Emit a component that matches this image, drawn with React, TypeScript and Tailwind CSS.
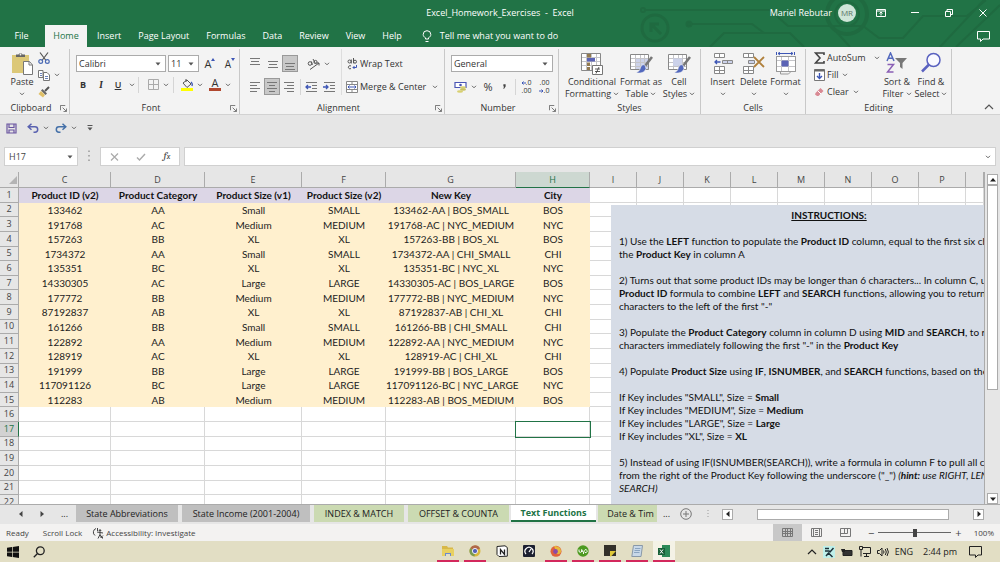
import type { ReactNode } from 'react';

const tabs = ['Insert', 'Page Layout', 'Formulas', 'Data', 'Review', 'View', 'Help'];

const headers = ['Product ID (v2)', 'Product Category', 'Product Size (v1)', 'Product Size (v2)', 'New Key', 'City'];

const records = [
    ['133462', 'AA', 'Small', 'SMALL', '133462-AA | BOS_SMALL', 'BOS'],
    ['191768', 'AC', 'Medium', 'MEDIUM', '191768-AC | NYC_MEDIUM', 'NYC'],
    ['157263', 'BB', 'XL', 'XL', '157263-BB | BOS_XL', 'BOS'],
    ['1734372', 'AA', 'Small', 'SMALL', '1734372-AA | CHI_SMALL', 'CHI'],
    ['135351', 'BC', 'XL', 'XL', '135351-BC | NYC_XL', 'NYC'],
    ['14330305', 'AC', 'Large', 'LARGE', '14330305-AC | BOS_LARGE', 'BOS'],
    ['177772', 'BB', 'Medium', 'MEDIUM', '177772-BB | NYC_MEDIUM', 'NYC'],
    ['87192837', 'AB', 'XL', 'XL', '87192837-AB | CHI_XL', 'CHI'],
    ['161266', 'BB', 'Small', 'SMALL', '161266-BB | CHI_SMALL', 'CHI'],
    ['122892', 'AA', 'Medium', 'MEDIUM', '122892-AA | NYC_MEDIUM', 'NYC'],
    ['128919', 'AC', 'XL', 'XL', '128919-AC | CHI_XL', 'CHI'],
    ['191999', 'BB', 'Large', 'LARGE', '191999-BB | BOS_LARGE', 'BOS'],
    ['117091126', 'BC', 'Large', 'LARGE', '117091126-BC | NYC_LARGE', 'NYC'],
    ['112283', 'AB', 'Medium', 'MEDIUM', '112283-AB | BOS_MEDIUM', 'BOS'],
];

const columns = [
    { id: 'C', width: 'w-[92px]' },
    { id: 'D', width: 'w-[94px]' },
    { id: 'E', width: 'w-[97px]' },
    { id: 'F', width: 'w-[84px]' },
    { id: 'G', width: 'w-[130px]' },
    { id: 'H', width: 'w-[74px]' },
    { id: 'I', width: 'w-[47px]' },
    { id: 'J', width: 'w-[47px]' },
    { id: 'K', width: 'w-[47px]' },
    { id: 'L', width: 'w-[47px]' },
    { id: 'M', width: 'w-[47px]' },
    { id: 'N', width: 'w-[47px]' },
    { id: 'O', width: 'w-[47px]' },
    { id: 'P', width: 'w-[47px]' },
    { id: '', width: '' },
];

function Chevron({ className = '' }: { className?: string }) {
    return (
        <svg viewBox="0 0 6 4" className={`h-1 w-1.5 shrink-0 ${className}`} fill="none" stroke="#666" strokeWidth="1">
            <path d="M1 .8 3 2.8 5 .8" />
        </svg>
    );
}

function Caret() {
    return (
        <svg viewBox="0 0 6 4" className="pointer-events-none h-1 w-1.5 shrink-0" fill="#555">
            <path d="M.5.5h5L3 3.500z" />
        </svg>
    );
}

function Divider() {
    return <span className="h-4 w-px shrink-0 bg-[#d5d5d5]" />;
}

function Launcher({ label }: { label: string }) {
    return (
        <button aria-label={label} className="shrink-0">
            <svg viewBox="0 0 8 8" className="size-[7px]" fill="none" stroke="#666">
                <path d="M.5 6V.5H6M3 3l4 4M7.500 4v3.500H4" />
            </svg>
        </button>
    );
}

function Group({ title, className, launcher, children }: { title: string; className: string; launcher?: boolean; children: ReactNode }) {
    return (
        <section className={`flex shrink-0 flex-col border-r border-[#c8c8c8] ${className}`}>
            <div className="min-h-0 flex-1">{children}</div>
            <div className="flex h-3 items-center px-0.5">
                <span className="flex-1 text-center">{title}</span>
                {launcher && <Launcher label={`${title} settings`} />}
            </div>
        </section>
    );
}

function IconButton({ label, className = 'w-[18px]', children }: { label: string; className?: string; children: ReactNode }) {
    return (
        <button aria-label={label} className={`flex h-[17px] shrink-0 items-center justify-center ${className}`}>
            {children}
        </button>
    );
}

function BigButton({ icon, lines, className, arrow = 'inline' }: { icon: ReactNode; lines: string[]; className: string; arrow?: 'inline' | 'below' }) {
    return (
        <button className={`flex shrink-0 flex-col items-center pt-0.5 leading-3 whitespace-nowrap ${className}`}>
            <span className="mb-px flex h-6 items-center">{icon}</span>
            {lines.map((line, i) => (
                <span key={line} className="flex items-center gap-0.5">
                    {line}
                    {arrow === 'inline' && i === lines.length - 1 && <Chevron />}
                </span>
            ))}
            {arrow === 'below' && <Chevron className="mt-1" />}
        </button>
    );
}

/* Horizontal rules of a paragraph, one [x1, x2] pair per line */
function Lines({ rows, top = 0 }: { rows: number[][]; top?: number }) {
    return (
        <svg viewBox="0 0 12 12" className="size-3" stroke="#777" strokeWidth="1">
            {rows.map(([a, b], i) => (
                <path key={i} d={`M${a} ${top + i * 3 + 0.5}H${b}`} />
            ))}
        </svg>
    );
}

function Indent({ flip }: { flip?: boolean }) {
    return (
        <svg viewBox="0 0 13 12" className="h-3 w-[13px]" fill="none" stroke="#777">
            <path d="M1 1.500h11M7 4.500h5M7 7.500h5M1 10.500h11" />
            <path d={flip ? 'M0 6h5M3 4l2 2-2 2' : 'M6 6H1M3 4 1 6l2 2'} stroke="#3d56b5" strokeWidth="1.300" />
        </svg>
    );
}

function TableBrush({ solid }: { solid?: boolean }) {
    return (
        <svg viewBox="0 0 24 24" className="size-6" fill="none">
            <path d="M1.500 3.500h18v15h-18z" fill="#fff" />
            <path d={solid ? 'M6 7h9v8H6z' : 'M6 7h14v12H6z'} fill="#ccd2ea" />
            <path d="M1.500 7.500h18M1.500 11.500h18M1.500 15.500h18M6.500 3.500v15M11.500 3.500v15M15.500 3.500v15" stroke="#c4c4c8" />
            {solid && <path d="M6 7.500h9v7H6z" fill="#ccd2ea" />}
            <path d="M1.500 3.500h18v15h-18z" stroke="#888" />
            <path d="m23 6-7 9" stroke="#777" strokeWidth="2.600" />
            <path d="M16 14c-3-1-4 1-5 4-.6 2-2 3-4 3.500 4 1.500 9 0 10-4z" fill="#5268bd" stroke="#f3f3f3" strokeWidth=".6" />
        </svg>
    );
}

function TitleBar() {
    return (
        <header className="relative h-[47px] shrink-0 bg-[#217346] text-white">
            <svg viewBox="0 0 360 47" className="absolute top-0 right-0 h-[47px] w-[360px]" fill="none" stroke="#1f6a40" strokeWidth="2">
                <circle cx="3" cy="10" r="2" />
                <path d="M5 10h125l18 16h75l16 12h24l20-22h44L346 0M50 24h62l12 9M70 47l14-14h66l14 14M210 47l-18-20M300 47l44-47M316 47l44-42" />
                <circle cx="15" cy="28" r="13" strokeWidth="3" />
                <path d="m21 34-10-10m0 8v-8h8" strokeWidth="3" />
                <circle cx="49" cy="24" r="2.500" fill="#1f6a40" />
                <circle cx="207" cy="14" r="20" strokeWidth="4" />
                <circle cx="207" cy="14" r="12" />
            </svg>
            <div className="relative grid h-[25px] grid-cols-[1fr_auto_1fr] items-center">
                <span />
                <span className="whitespace-pre">Excel_Homework_Exercises  -  Excel</span>
                <div className="flex items-center justify-end pr-3">
                    <span className="mr-1.5">Mariel Rebutar</span>
                    <span className="mr-5 flex size-[18px] items-center justify-center rounded-full bg-[#cfe5d8] text-[8px] text-[#5c7468]">MR</span>
                    <button aria-label="Ribbon display options" className="mr-6">
                        <svg viewBox="0 0 10 8" className="h-2 w-2.5" fill="none" stroke="#fff">
                            <path d="M.5.5h9v7h-9zM.5 2h9M5 6.500V3M3.500 4.500 5 3l1.500 1.500" />
                        </svg>
                    </button>
                    <button aria-label="Minimize" className="mr-6">
                        <svg viewBox="0 0 10 8" className="h-2 w-2.5" stroke="#fff">
                            <path d="M1 3.500h8" />
                        </svg>
                    </button>
                    <button aria-label="Restore" className="mr-6">
                        <svg viewBox="0 0 10 8" className="h-2 w-2.5" fill="none" stroke="#fff">
                            <path d="M1.500 2.500h5v5h-5zM3 2.500V.5h5.500v5h-2" />
                        </svg>
                    </button>
                    <button aria-label="Close">
                        <svg viewBox="0 0 10 8" className="h-2 w-2.5" stroke="#fff">
                            <path d="m1.500.5 7 7m0-7-7 7" />
                        </svg>
                    </button>
                </div>
            </div>
            <nav className="relative flex h-[22px] items-center">
                <button className="w-[45px] pr-0.5 text-center">File</button>
                <button className="h-full w-[42px] bg-[#f3f3f3] text-[#217346]">Home</button>
                <div className="ml-2.5 flex gap-[17px]">
                    {tabs.map((tab) => (
                        <button key={tab}>{tab}</button>
                    ))}
                </div>
                <button className="ml-5 flex items-center gap-2">
                    <svg viewBox="0 0 10 13" className="h-[13px] w-2.5" fill="none" stroke="#fff">
                        <path d="M3.500 9V7.800C2 7 1.200 6 1.200 4.500a3.800 3.800 0 0 1 7.600 0C8.800 6 8 7 6.500 7.800V9zM3.500 11.500h3" />
                    </svg>
                    Tell me what you want to do
                </button>
                <button aria-label="Comments" className="mr-2.5 ml-auto">
                    <svg viewBox="0 0 13 11" className="h-[11px] w-[13px]" fill="none" stroke="#fff">
                        <path d="M.5.5h12v7.500H6L3.500 10.500V8h-3z" />
                    </svg>
                </button>
            </nav>
        </header>
    );
}

function Ribbon() {
    return (
        <div className="flex h-[68px] shrink-0 border-b border-[#d2d2d2] bg-[#f3f3f3] pt-0.5 text-[#333]">
            {/* Clipboard */}
            <Group title="Clipboard" className="w-[70px]" launcher>
                <div className="flex pl-2">
                    <BigButton
                        className="w-[28px]"
                        arrow="below"
                        lines={['Paste']}
                        icon={
                            <svg viewBox="0 0 22 23" className="h-[23px] w-[22px]">
                                <rect x="1" y="3" width="17" height="18" fill="#dcc878" />
                                <path d="M5 5V2.500h2.500a2.200 2.200 0 0 1 4 0H14V5z" fill="#666" />
                                <circle cx="9.500" cy="2.500" r=".9" fill="#f3f3f3" />
                                <path d="M12.500 9.500h6l3 3.500v9.500h-9z" fill="#fff" stroke="#777" />
                                <path d="M18 9.500V13h3.500" fill="none" stroke="#777" />
                            </svg>
                        }
                    />
                    <div className="ml-0.5 flex flex-col">
                        <IconButton label="Cut" className="w-3">
                            <svg viewBox="0 0 12 12" className="size-3" fill="none" stroke="#555" strokeWidth="1.200">
                                <path d="m2 .5 6 8M10 .5l-6 8" />
                                <circle cx="2.700" cy="9.500" r="1.900" stroke="#4a6ab5" />
                                <circle cx="9.300" cy="9.500" r="1.900" stroke="#4a6ab5" />
                            </svg>
                        </IconButton>
                        <IconButton label="Copy" className="w-[22px] gap-1">
                            <svg viewBox="0 0 12 12" className="size-3" fill="#fff" stroke="#777">
                                <path d="M.5 1.500H5v7H.5zM5.500 3.500H9l2.500 2.500v5.500h-6z" />
                                <path d="M7 7.500h3M7 9.500h3M2 4.500h2M2 6.500h2" stroke="#6a80b8" />
                            </svg>
                            <Chevron />
                        </IconButton>
                        <IconButton label="Format painter" className="w-3">
                            <svg viewBox="0 0 12 12" className="size-3">
                                <path d="m11 1-4 4" stroke="#555" strokeWidth="2" />
                                <path d="m4.500 3 4.500 4.500-1.500 1.500L3 4.500z" fill="#666" />
                                <path d="M3 5 7 9l-2 2.500L.5 8z" fill="#e0c068" />
                            </svg>
                        </IconButton>
                    </div>
                </div>
            </Group>

            {/* Font */}
            <Group title="Font" className="w-[170px]" launcher>
                <div className="flex items-center gap-0.5 pt-1.5 pl-1.5">
                    <label className="flex h-[17px] w-[90px] items-center border border-[#ababab] bg-white pr-1">
                        <select aria-label="Font name" className="h-full min-w-0 flex-1 appearance-none pl-0.5 outline-none">
                            <option>Calibri</option>
                        </select>
                        <Caret />
                    </label>
                    <label className="flex h-[17px] w-[31px] items-center border border-[#ababab] bg-white pr-1">
                        <select aria-label="Font size" className="h-full min-w-0 flex-1 appearance-none pl-0.5 outline-none">
                            <option>11</option>
                        </select>
                        <Caret />
                    </label>
                    <IconButton label="Increase font size">
                        <span className="text-[11px]">A</span>
                        <svg viewBox="0 0 4 3" className="mb-2 h-[3px] w-1" fill="#3d56b5">
                            <path d="M0 3 2 0l2 3z" />
                        </svg>
                    </IconButton>
                    <IconButton label="Decrease font size">
                        <span className="text-[10px]">A</span>
                        <svg viewBox="0 0 4 3" className="mb-2 h-[3px] w-1" fill="#3d56b5">
                            <path d="M0 0h4L2 3z" />
                        </svg>
                    </IconButton>
                </div>
                <div className="flex items-center pt-1 pl-1">
                    <IconButton label="Bold">
                        <b>B</b>
                    </IconButton>
                    <IconButton label="Italic">
                        <i className="font-serif text-[10px] font-bold">I</i>
                    </IconButton>
                    <IconButton label="Underline" className="w-4">
                        <u className="font-semibold">U</u>
                    </IconButton>
                    <IconButton label="Underline options" className="w-3">
                        <Chevron />
                    </IconButton>
                    <Divider />
                    <IconButton label="Borders" className="w-[34px] gap-1 pl-1">
                        <svg viewBox="0 0 11 11" className="size-[11px]" fill="none" stroke="#aaa">
                            <path d="M.5.500h10v10H.5zM5.500.5v10M.5 5.500h10" />
                        </svg>
                        <Chevron />
                    </IconButton>
                    <Divider />
                    <IconButton label="Fill color" className="w-[32px] gap-1 pl-1">
                        <svg viewBox="0 0 12 13" className="h-[13px] w-3" fill="none" stroke="#555">
                            <path d="M5 1v3M2 5l4-3 4 4-4 3.500z" />
                            <path d="M10 4c1 1 1.500 3 .8 4" stroke="#3d56b5" strokeWidth="1.300" />
                            <path d="M0 11.500h12" stroke="#ffff00" strokeWidth="3" />
                        </svg>
                        <Chevron />
                    </IconButton>
                    <IconButton label="Font color" className="w-[28px] gap-1">
                        <span className="w-3 border-b-3 border-[#b0472e] text-[11px] leading-[10px]">A</span>
                        <Chevron />
                    </IconButton>
                </div>
            </Group>

            {/* Alignment */}
            <Group title="Alignment" className="w-[205px]" launcher>
                <div className="flex">
                    <div className="w-[102px] border-r border-[#ddd] pl-1.5">
                        <div className="flex items-center pt-1.5">
                            <IconButton label="Top align">
                                <Lines rows={[[1, 11], [2, 10], [1, 11]]} />
                            </IconButton>
                            <IconButton label="Middle align">
                                <Lines top={3} rows={[[1, 11], [2, 10], [1, 11]]} />
                            </IconButton>
                            <IconButton label="Bottom align" className="w-4 border border-[#999] bg-[#c8c8c8]">
                                <Lines top={5} rows={[[1, 11], [2, 10], [1, 11]]} />
                            </IconButton>
                            <IconButton label="Orientation" className="ml-1.5 w-[28px] gap-1">
                                <svg viewBox="0 0 13 12" className="h-3 w-[13px]" fill="none" stroke="#555">
                                    <circle cx="3" cy="5.500" r="1.800" />
                                    <path d="m4.500 3.500.8 3.500M6 1l2.500 4.500" />
                                    <circle cx="8.500" cy="4" r="1.600" />
                                    <path d="M3 11.500 12 5M9.500 5H12v2.500" />
                                </svg>
                                <Chevron />
                            </IconButton>
                        </div>
                        <div className="flex items-center pt-1.5">
                            <IconButton label="Align left">
                                <Lines top={1} rows={[[1, 11], [1, 8], [1, 11], [1, 8]]} />
                            </IconButton>
                            <IconButton label="Center" className="w-4 border border-[#999] bg-[#c8c8c8]">
                                <Lines top={1} rows={[[1, 11], [3, 9], [1, 11], [3, 9]]} />
                            </IconButton>
                            <IconButton label="Align right">
                                <Lines top={1} rows={[[1, 11], [4, 11], [1, 11], [4, 11]]} />
                            </IconButton>
                            <span className="w-0.5" />
                            <Divider />
                            <IconButton label="Decrease indent" className="w-5">
                                <Indent />
                            </IconButton>
                            <IconButton label="Increase indent" className="w-4">
                                <Indent flip />
                            </IconButton>
                        </div>
                    </div>
                    <div className="pl-1">
                        <button className="mt-1.5 flex h-[17px] items-center gap-0.5">
                            <svg viewBox="0 0 12 12" className="size-3" fill="none" stroke="#555">
                                <circle cx="3.500" cy="3.500" r="1.500" />
                                <path d="M5.300 1.500v4M7.500 0v5.300" />
                                <circle cx="9" cy="3.700" r="1.500" />
                                <path d="M5 8a1.600 1.600 0 1 0 0 2.500" />
                                <path d="M10.500 7v2.500H7M8.500 8 7 9.500 8.500 11" stroke="#3d56b5" />
                            </svg>
                            Wrap Text
                        </button>
                        <button className="mt-1.5 flex h-[17px] items-center gap-0.5 whitespace-nowrap">
                            <svg viewBox="0 0 12 12" className="size-3" fill="#fff" stroke="#888">
                                <path d="M.5.5h11v11H.5zM6 .5V3M6 9v2.500M.5 3.500h11M.5 8.500h11" />
                                <path d="M2 6h8M3.500 4.500 2 6l1.500 1.500M8.500 4.500 10 6 8.500 7.500" stroke="#3d56b5" fill="none" />
                            </svg>
                            Merge &amp; Center
                            <Chevron className="ml-1" />
                        </button>
                    </div>
                </div>
            </Group>

            {/* Number */}
            <Group title="Number" className="w-[114px]" launcher>
                <label className="mt-1.5 ml-1.5 flex h-[17px] w-[102px] items-center border border-[#ababab] bg-white pr-1">
                    <select aria-label="Number format" className="h-full min-w-0 flex-1 appearance-none pl-0.5 outline-none">
                        <option>General</option>
                    </select>
                    <Caret />
                </label>
                <div className="flex items-center pt-1.5 pl-1.5">
                    <IconButton label="Accounting format" className="w-[28px] gap-1">
                        <svg viewBox="0 0 13 12" className="h-3 w-[13px]">
                            <path d="M1 1.500h11v5H1z" fill="#fff" stroke="#4a55b5" strokeWidth="1.200" />
                            <circle cx="6.500" cy="4" r="1.300" fill="#4a55b5" />
                            <ellipse cx="9" cy="6.500" rx="3" ry="1.200" fill="#d8d070" />
                            <ellipse cx="9" cy="8.500" rx="3" ry="1.200" fill="#c8c060" />
                            <ellipse cx="6" cy="10.500" rx="3" ry="1.200" fill="#d8d070" />
                        </svg>
                        <Chevron />
                    </IconButton>
                    <IconButton label="Percent style">
                        <span className="text-[11px]">%</span>
                    </IconButton>
                    <IconButton label="Comma style" className="w-3.5">
                        <svg viewBox="0 0 4 6" className="h-[5px] w-[3px]" fill="#444">
                            <path d="M.5 0h3v3L1.500 6H.3L1.500 3h-1z" />
                        </svg>
                    </IconButton>
                    <span className="w-1" />
                    <Divider />
                    <IconButton label="Increase decimal" className="w-5">
                        <span className="flex flex-col items-end text-[7px] leading-2">
                            <span className="flex items-center">
                                <svg viewBox="0 0 5 4" className="h-1 w-[5px]" fill="none" stroke="#3d56b5">
                                    <path d="M5 2H1M2.500.5 1 2l1.500 1.500" />
                                </svg>
                                .0
                            </span>
                            <span>.00</span>
                        </span>
                    </IconButton>
                    <IconButton label="Decrease decimal" className="w-4">
                        <span className="flex flex-col items-end text-[7px] leading-2">
                            <span>.00</span>
                            <span className="flex items-center">
                                <svg viewBox="0 0 5 4" className="h-1 w-[5px]" fill="none" stroke="#3d56b5">
                                    <path d="M0 2h4M2.500.5 4 2 2.500 3.500" />
                                </svg>
                                .0
                            </span>
                        </span>
                    </IconButton>
                </div>
            </Group>

            {/* Styles */}
            <Group title="Styles" className="w-[142px]">
                <div className="flex pl-1">
                    <BigButton
                        className="w-[58px]"
                        lines={['Conditional', 'Formatting']}
                        icon={
                            <svg viewBox="0 0 22 23" className="h-[23px] w-[22px]" fill="none">
                                <path d="M.5 1.500h19v17H.5z" fill="#fff" />
                                <path d="M.5 5.500h19M.5 9.500h19M.5 13.500h19M5.500 1.500v17M10.500 1.500v17M15.500 1.500v17" stroke="#c4c4c8" />
                                <path d="M.5 1.500h19v17H.5z" stroke="#888" />
                                <path d="M6 2h4v3.500H6z" fill="#927a50" />
                                <path d="M6 6h8v3.500H6z" fill="#5a62b5" />
                                <path d="M6 10.500h3V14H6zM6 15h3v3H6z" fill="#927a50" />
                                <path d="M11.500 13.500h10v9h-10z" fill="#fff" stroke="#777" />
                                <path d="M14 17h5M14 19.500h5M18 15l-3 6.500" stroke="#333" strokeWidth=".8" />
                            </svg>
                        }
                    />
                    <BigButton className="w-[40px]" lines={['Format as', 'Table']} icon={<TableBrush />} />
                    <BigButton className="w-[36px]" lines={['Cell', 'Styles']} icon={<TableBrush solid />} />
                </div>
            </Group>

            {/* Cells */}
            <Group title="Cells" className="w-[105px]">
                <div className="flex pl-1.5">
                    <BigButton
                        className="w-[31px]"
                        arrow="below"
                        lines={['Insert']}
                        icon={
                            <svg viewBox="0 0 20 21" className="h-[21px] w-5" fill="#fff" stroke="#888">
                                <path d="M1.500.5h10v4h-10zM6.500.5v4M1.500 13.500h10v7h-10zM6.500 13.500v7M1.500 17.500h10" />
                                <path d="M9.500 7.500h10v3h-10zM14.500 7.500v3" fill="#ccd2ea" />
                                <path d="M7.500 9H2M4 7 2 9l2 2" fill="none" stroke="#3d56b5" strokeWidth="1.300" />
                            </svg>
                        }
                    />
                    <BigButton
                        className="w-[31px]"
                        arrow="below"
                        lines={['Delete']}
                        icon={
                            <svg viewBox="0 0 22 21" className="h-[21px] w-[22px]" fill="#fff" stroke="#888">
                                <path d="M.5.5h10v4H.5zM5.500.5v4M.5 13.500h10v7H.5zM5.500 13.500v7M.5 17.500h10" />
                                <path d="M5.500 7.500h6v3h-6z" fill="#ccd2ea" />
                                <path d="m11 4 10 10m0-10L11 14" fill="none" stroke="#b0803c" strokeWidth="1.800" />
                            </svg>
                        }
                    />
                    <BigButton
                        className="w-[33px]"
                        arrow="below"
                        lines={['Format']}
                        icon={
                            <svg viewBox="0 0 22 23" className="h-[23px] w-[22px]" fill="none" stroke="#999">
                                <path d="M1.500 4.500h19v15h-19z" fill="#fff" />
                                <path d="M1.500 8.500h19M1.500 14.500h19M6.500 4.500v15M13.500 4.500v15" stroke="#c4c4c8" />
                                <path d="M1.500 4.500h19v15h-19zM5.500 20v2h8l2-2" />
                                <path d="M7 9h6v5H7z" fill="#5a62b5" stroke="#5a62b5" />
                                <path d="M3 1.500h15M5 0 3 1.500 5 3M16 0l2 1.500L16 3M1.500 0v3M19.500 0v3" stroke="#3d56b5" />
                            </svg>
                        }
                    />
                </div>
            </Group>

            {/* Editing */}
            <Group title="Editing" className="w-[146px]">
                <div className="flex pl-2">
                    <div className="flex w-[66px] flex-col">
                        <button className="flex h-[17px] items-center gap-0.5">
                            <svg viewBox="0 0 11 12" className="h-3 w-[11px]" fill="none" stroke="#444" strokeWidth="1.600">
                                <path d="M10 3V1H1.500L6 6l-4.500 5H10V9" />
                            </svg>
                            AutoSum
                            <Chevron className="ml-auto" />
                        </button>
                        <button className="flex h-[17px] items-center gap-0.5">
                            <svg viewBox="0 0 11 12" className="h-3 w-[11px]" fill="#fff" stroke="#777">
                                <path d="M.5.5h10v11H.5z" />
                                <path d="M.5 1.500h10" stroke="#666" strokeWidth="2" />
                                <path d="M5.500 4v5.500M3 7l2.500 2.500L8 7" fill="none" stroke="#3d56b5" strokeWidth="1.400" />
                            </svg>
                            Fill
                            <Chevron className="ml-0.5" />
                        </button>
                        <button className="flex h-[17px] items-center gap-0.5">
                            <svg viewBox="0 0 11 12" className="h-3 w-[11px]">
                                <path d="m1.500 7 5-5 3 3-5 5H3L1 8.500z" fill="#d98a94" />
                                <path d="m4 5 3 3" stroke="#fff" />
                            </svg>
                            Clear
                            <Chevron className="ml-0.5" />
                        </button>
                    </div>
                    <BigButton
                        className="w-[34px]"
                        lines={['Sort &', 'Filter']}
                        icon={
                            <svg viewBox="0 0 22 22" className="size-[22px]" fill="none">
                                <path d="m1 9 3.500-8L8 9M2.300 6.300h4.400" stroke="#5268bd" strokeWidth="1.500" />
                                <path d="M1.500 12.500h6L1.500 20h6" stroke="#8a5fb5" strokeWidth="1.500" />
                                <path d="M9 6h12l-4.500 5v6L14 15v-4z" fill="#777" />
                            </svg>
                        }
                    />
                    <BigButton
                        className="w-[34px]"
                        lines={['Find &', 'Select']}
                        icon={
                            <svg viewBox="0 0 22 22" className="size-[22px]" fill="none" stroke="#5a62c0">
                                <circle cx="13.500" cy="8" r="6.500" strokeWidth="1.500" fill="#fafaff" />
                                <path d="m9 12.500-7 7" strokeWidth="2.500" />
                            </svg>
                        }
                    />
                </div>
            </Group>
            <button aria-label="Collapse ribbon" className="mt-auto mr-1.5 mb-1 ml-auto">
                <svg viewBox="0 0 10 6" className="h-1.5 w-2.5" fill="none" stroke="#555" strokeWidth="1.200">
                    <path d="m1 5 4-4 4 4" />
                </svg>
            </button>
        </div>
    );
}

function QuickAccess() {
    return (
        <div className="flex h-[26px] shrink-0 items-center pl-1.5">
            <button aria-label="Save">
                <svg viewBox="0 0 11 11" className="size-[11px]" fill="none" stroke="#6a55a0" strokeWidth="1.200">
                    <path d="M1 1h9v9H1zM3 1v3.500h5V1M3 10V7h5v3" />
                </svg>
            </button>
            <button aria-label="Undo" className="ml-2.5 flex items-center gap-1">
                <svg viewBox="0 0 12 10" className="h-2.5 w-3" fill="none" stroke="#5a62b0" strokeWidth="1.500">
                    <path d="M4.500.8 1.200 3.800l3.300 3M1.500 3.800H8a2.700 2.700 0 0 1 0 5.400H6.500" />
                </svg>
                <Chevron />
            </button>
            <button aria-label="Redo" className="ml-1.5 flex items-center gap-1">
                <svg viewBox="0 0 12 10" className="h-2.5 w-3" fill="none" stroke="#4470a8" strokeWidth="1.500">
                    <path d="m7.500.8 3.300 3-3.300 3M10.500 3.800H4a2.700 2.700 0 0 0 0 5.400h1.500" />
                </svg>
                <Chevron />
            </button>
            <button aria-label="Customize quick access toolbar" className="ml-2.5">
                <svg viewBox="0 0 6 6" className="size-1.5" fill="#555">
                    <path d="M.5 0h5v1h-5zM.5 2.500h5L3 5.500z" />
                </svg>
            </button>
        </div>
    );
}

function FormulaBar() {
    return (
        <div className="flex h-[31px] shrink-0 items-start gap-1 px-1 pt-1.5 text-[#444]">
            <label className="flex h-[19px] w-[74px] items-center border border-[#d0d0d0] bg-white pr-1">
                <input aria-label="Name box" defaultValue="H17" className="min-w-0 flex-1 pl-1 outline-none" />
                <Caret />
            </label>
            <svg viewBox="0 0 4 10" className="mx-1 h-[19px] w-1.5" fill="#999">
                <path d="M1.500 1h1v1h-1zM1.500 4h1v1h-1zM1.500 7h1v1h-1z" />
            </svg>
            <div className="flex h-[19px] w-[80px] items-center justify-around border border-[#d0d0d0] bg-white">
                <button aria-label="Cancel">
                    <svg viewBox="0 0 9 8" className="h-2 w-[9px]" stroke="#aaa" strokeWidth="1.200">
                        <path d="m1 .5 7 7m0-7-7 7" />
                    </svg>
                </button>
                <button aria-label="Enter">
                    <svg viewBox="0 0 10 8" className="h-2 w-2.5" fill="none" stroke="#aaa" strokeWidth="1.400">
                        <path d="m1 4.500 2.500 2.500L9 1" />
                    </svg>
                </button>
                <button aria-label="Insert function" className="font-serif text-[11px] italic">
                    f<span className="text-[8px]">x</span>
                </button>
            </div>
            <label className="flex h-[19px] min-w-0 flex-1 items-center border border-[#d0d0d0] bg-white pr-1">
                <input aria-label="Formula" className="min-w-0 flex-1 px-1 outline-none" />
                <Chevron />
            </label>
        </div>
    );
}

function cellClass(row: number, col: number) {
    if (col < 6 && row === 1) return 'bg-[#dcd6e6] font-bold text-[#111]';
    if (col < 6 && row <= 15) return 'bg-[#fff0ce]';
    return 'border-r border-b border-[#d8d8d8]';
}

function Sheet() {
    const rows = Array.from({ length: 22 }, (_, i) => i + 1);

    return (
        <div className="relative min-w-0 flex-1 overflow-hidden border-r border-[#ababab]">
            <table className="h-[338px] w-full table-fixed border-separate border-spacing-0 bg-white text-center font-[Lato,sans-serif] text-[10px] leading-3 whitespace-nowrap text-[#222]">
                <thead>
                    <tr className="h-4 bg-[#e6e6e6] font-['Open_Sans',sans-serif] text-[9px] text-[#444]">
                        <th className="w-[19px] border-r border-b border-[#ababab] p-0">
                            <svg viewBox="0 0 10 10" className="ml-auto size-2.5" fill="#b4b4b4">
                                <path d="M9 1v8H1z" />
                            </svg>
                        </th>
                        {columns.map((col) => (
                            <th
                                key={col.id}
                                className={`border-r border-b p-0 font-normal ${col.width} ${col.id === 'H' ? 'border-r-[#ababab] border-b-[#217346] bg-[#cdd8d1] text-[#217346]' : 'border-[#ababab]'}`}
                            >
                                {col.id}
                            </th>
                        ))}
                    </tr>
                </thead>
                <tbody>
                    {rows.map((row) => (
                        <tr key={row}>
                            <th
                                className={`border-r border-b border-[#ababab] p-0 font-['Open_Sans',sans-serif] text-[9px] font-normal ${row === 17 ? 'border-r-[#217346] bg-[#d2d2d2] text-[#217346]' : 'bg-[#e6e6e6] text-[#444]'}`}
                            >
                                {row}
                            </th>
                            {columns.map((col, c) => (
                                <td
                                    key={col.id}
                                    className={`p-0 ${cellClass(row, c)} ${row === 17 && col.id === 'H' ? 'outline outline-[#217346]' : ''}`}
                                >
                                    {row === 1 ? headers[c] : records[row - 2]?.[c]}
                                </td>
                            ))}
                        </tr>
                    ))}
                </tbody>
            </table>

            {/* Text box floating over the cells */}
            <div className="absolute top-[33px] bottom-0 left-[611px] flex w-[436px] flex-col gap-[13px] bg-[#d6dce6] px-2 pt-1 font-[Lato,sans-serif] text-[10px] leading-[13px] whitespace-nowrap text-[#111]">
                <h2 className="text-center font-bold underline">INSTRUCTIONS:</h2>
                <p>
                    1) Use the <b>LEFT</b> function to populate the <b>Product ID</b> column, equal to the first six characters of
                    <br />
                    the <b>Product Key</b> in column A
                </p>
                <p>
                    2) Turns out that some product IDs may be longer than 6 characters... In column C, update
                    <br />
                    <b>Product ID</b> formula to combine <b>LEFT</b> and <b>SEARCH</b> functions, allowing you to return ALL
                    <br />
                    characters to the left of the first "-"
                </p>
                <p>
                    3) Populate the <b>Product Category</b> column in column D using <b>MID</b> and <b>SEARCH</b>, to return
                    <br />
                    characters immediately following the first "-" in the <b>Product Key</b>
                </p>
                <p>
                    4) Populate <b>Product Size</b> using <b>IF</b>, <b>ISNUMBER</b>, and <b>SEARCH</b> functions, based on the logic
                </p>
                <p>
                    If Key includes "SMALL", Size = <b>Small</b>
                    <br />
                    If Key includes "MEDIUM", Size = <b>Medium</b>
                    <br />
                    If Key includes "LARGE", Size = <b>Large</b>
                    <br />
                    If Key includes "XL", Size = <b>XL</b>
                </p>
                <p>
                    5) Instead of using IF(ISNUMBER(SEARCH)), write a formula in column F to pull all characters
                    <br />
                    from the right of the Product Key following the underscore ("_"){' '}
                    <i>
                        (<b>hint:</b> use RIGHT, LEN and
                        <br />
                        SEARCH)
                    </i>
                </p>
            </div>
        </div>
    );
}

function ScrollArrow({ label, path }: { label: string; path: string }) {
    return (
        <button aria-label={label} className="flex size-[11px] shrink-0 items-center justify-center border border-[#ababab] bg-white">
            <svg viewBox="0 0 6 6" className="size-1.5" fill="#222">
                <path d={path} />
            </svg>
        </button>
    );
}

function SheetTabs() {
    const plain = 'flex h-[17px] shrink-0 items-center justify-center whitespace-nowrap';
    return (
        <div className="flex h-5 shrink-0 items-start border-t border-[#ababab] text-[#222]">
            <div className="flex h-[18px] w-[76px] shrink-0 items-center justify-between pr-2 pl-[18px]">
                <button aria-label="Previous sheet">
                    <svg viewBox="0 0 6 6" className="size-1.5" fill="#444">
                        <path d="M4.500 0v6L1 3z" />
                    </svg>
                </button>
                <button aria-label="Next sheet">
                    <svg viewBox="0 0 6 6" className="size-1.5" fill="#444">
                        <path d="M1.500 0v6L5 3z" />
                    </svg>
                </button>
                <button>...</button>
            </div>
            <button className={`${plain} mr-1 w-[102px] bg-[#bfbfbf]`}>State Abbreviations</button>
            <button className={`${plain} mr-1 w-[128px] bg-[#bfbfbf]`}>State Income (2001-2004)</button>
            <button className={`${plain} mr-1 w-[90px] bg-[#cbdab2]`}>INDEX &amp; MATCH</button>
            <button className={`${plain} mr-0.5 w-[101px] bg-[#cbdab2]`}>OFFSET &amp; COUNTA</button>
            <button className={`${plain} mr-0.5 w-[85px] border-b-2 border-[#217346] bg-white font-bold text-[#217346]`}>Text Functions</button>
            <button className={`${plain} w-[59px] bg-[#cbdab2] pl-1.5`}>Date &amp; Tim</button>
            <div className="flex h-[18px] min-w-0 flex-1 items-center pr-4 pl-1.5">
                <button>...</button>
                <button aria-label="New sheet" className="ml-2.5">
                    <svg viewBox="0 0 12 12" className="size-3" fill="none" stroke="#777">
                        <circle cx="6" cy="6" r="5.300" />
                        <path d="M6 3v6M3 6h6" />
                    </svg>
                </button>
                <svg viewBox="0 0 4 10" className="mr-3 ml-3.5 h-2.5 w-1" fill="#999">
                    <path d="M1.500 1h1v1h-1zM1.500 4h1v1h-1zM1.500 7h1v1h-1z" />
                </svg>
                <ScrollArrow label="Scroll left" path="M4.500 0v6L1 3z" />
                <div className="flex h-[11px] min-w-0 flex-1 pr-6 pl-6">
                    <div className="w-full border border-[#ababab] bg-white" />
                </div>
                <ScrollArrow label="Scroll right" path="M1.500 0v6L5 3z" />
            </div>
        </div>
    );
}

function StatusBar() {
    return (
        <footer className="flex h-[17px] shrink-0 items-center bg-[#f3f2f1] px-1.5 text-[8px] text-[#444]">
            <span>Ready</span>
            <span className="ml-3.5">Scroll Lock</span>
            <button className="ml-2.5 flex items-center gap-0.5">
                <svg viewBox="0 0 12 12" className="size-3" fill="none" stroke="#444">
                    <path d="M4 1.500a4 4 0 0 0-1 7M5.500 1v3M5 5l6 1M8 5.500v2l-2 4M8 7.500l2.500 4M8 8.500 11 11M11 8.500 8.500 11" />
                    <circle cx="8" cy="3.500" r=".8" fill="#444" />
                </svg>
                Accessibility: Investigate
            </button>
            <div className="ml-auto flex h-full items-center">
                <button aria-label="Normal view" className="flex h-full w-[29px] items-center justify-center bg-[#c8c8c8]">
                    <svg viewBox="0 0 11 9" className="h-[9px] w-[11px]" fill="none" stroke="#777">
                        <path d="M.5.5h10v8H.5zM.5 3.500h10M.5 5.500h10M3.500 .5v8M5.500.5v8M8.500 .5v8" />
                    </svg>
                </button>
                <button aria-label="Page layout view" className="flex h-full w-[29px] items-center justify-center">
                    <svg viewBox="0 0 11 9" className="h-[9px] w-[11px]" fill="none" stroke="#777">
                        <path d="M.5.5h10v8H.5zM2.500 .5v8M8.500 .5v8M4 2.500h3M4 4.500h3M4 6.500h3" />
                    </svg>
                </button>
                <button aria-label="Page break view" className="flex h-full w-[29px] items-center justify-center">
                    <svg viewBox="0 0 11 9" className="h-[9px] w-[11px]" fill="none" stroke="#777">
                        <path d="M.5.5h10v8H.5zM4.500 .5v5M7.500.5v5M.5 5.500h7" />
                    </svg>
                </button>
                <button className="ml-2 text-[11px] leading-none">−</button>
                <div className="relative mx-1 flex h-px w-[73px] items-center justify-center bg-[#666]">
                    <input type="range" aria-label="Zoom" className="h-2 w-full opacity-0" />
                    <span className="pointer-events-none absolute h-2 w-1 bg-[#444]" />
                </div>
                <button className="text-[11px] leading-none">+</button>
                <span className="ml-3">100%</span>
            </div>
        </footer>
    );
}

function TaskIcon({ label, running, active, children }: { label: string; running?: boolean; active?: boolean; children: ReactNode }) {
    return (
        <button
            aria-label={label}
            className={`flex h-full w-[22px] items-center justify-center border-b-2 ${running ? 'border-[#d3285c]' : 'border-transparent'} ${active ? 'bg-[#f4f2e6]' : ''}`}
        >
            <svg viewBox="0 0 12 12" className="size-3" fill="none">
                {children}
            </svg>
        </button>
    );
}

function Taskbar() {
    return (
        <div className="flex h-[21px] shrink-0 items-center bg-[#e2dec4] text-[#222]">
            <div className="flex flex-7 items-center gap-3.5 pl-[7px]">
                <button aria-label="Start">
                    <svg viewBox="0 0 12 12" className="size-3" fill="#111">
                        <path d="M0 1.800 5 1v4.700H0zM5.700 1 12 0v5.700H5.700zM0 6.400h5V11L0 10.300zM5.700 6.400H12V12l-6.300-1z" />
                    </svg>
                </button>
                <button aria-label="Search">
                    <svg viewBox="0 0 12 12" className="size-3" fill="none" stroke="#222" strokeWidth="1.300">
                        <circle cx="7.300" cy="4.700" r="3.900" />
                        <path d="M4.500 7.500.8 11.300" />
                    </svg>
                </button>
            </div>
            <div className="flex h-full gap-[5px]">
                <TaskIcon label="File Explorer" running>
                    <path d="M0 1h5l1 1.500h5V6H0z" fill="#d8b848" />
                    <path d="M0 4h12v7H9V8H3v3H0z" fill="#e8d060" />
                    <path d="M3 8h6v3H8V9H4v2H3z" fill="#6a8ad0" />
                </TaskIcon>
                <TaskIcon label="Chrome" running>
                    <circle cx="6" cy="6" r="5.500" fill="#d8b83c" />
                    <path d="M6 6 1.200 3.200A5.500 5.500 0 0 1 11 3.500z" fill="#b0684a" />
                    <path d="M6 6 1.200 3.200A5.500 5.500 0 0 0 5.500 11.500z" fill="#7a9a50" />
                    <circle cx="6" cy="6" r="2.600" fill="#5560b8" stroke="#eee" />
                </TaskIcon>
                <TaskIcon label="Notion">
                    <path d="M1 1.500 9 .8l2.300 1.700v8.700L3 11.500 1 9.500z" fill="#fff" stroke="#222" />
                    <path d="M4.500 9.500V4.500l4 5v-5" stroke="#222" strokeWidth="1.300" />
                </TaskIcon>
                <TaskIcon label="Speed test">
                    <rect width="12" height="12" rx="1" fill="#1c2030" />
                    <path d="M3 9a4 4 0 1 1 6 0M6 7l2-3" stroke="#fff" strokeWidth="1.200" />
                </TaskIcon>
                <TaskIcon label="Firefox" running>
                    <circle cx="6" cy="6.300" r="5.500" fill="#e0603c" />
                    <path d="M4 1c4 0 7.500 2 7 6-2 4-6 2-5-1z" fill="#e8b83c" />
                    <circle cx="5.500" cy="6.500" r="2.400" fill="#8a4aa8" />
                </TaskIcon>
                <TaskIcon label="Upwork" running>
                    <circle cx="6" cy="6" r="5.700" fill="#4c9a20" />
                    <path d="M2 4.500v1.500a1.300 1.300 0 0 0 2.700 0V4.500C5.500 7 6.500 7.500 7 7.500M6.300 9l1-3.500a1.500 1.500 0 1 1 .7 2" stroke="#fff" />
                </TaskIcon>
                <TaskIcon label="Sticky Notes" running>
                    <rect width="12" height="11" fill="#33302a" />
                    <path d="M6 6h6l-5 5.500H6z" fill="#e0c838" />
                </TaskIcon>
                <TaskIcon label="Notepad" running>
                    <path d="M2.500.5h9l-1.500 11H.8z" fill="#c8d8e8" stroke="#8898a8" />
                    <path d="M4 3.500h5.500M3.500 5.500H9M3 7.500h5.500" stroke="#8aa4c0" />
                </TaskIcon>
                <TaskIcon label="Excel" running active>
                    <path d="M4 0h8v12H4z" fill="#2c8a58" />
                    <path d="M0 3h7v7H0z" fill="#176038" />
                    <path d="m2 4.500 3 4m0-4-3 4" stroke="#fff" />
                </TaskIcon>
            </div>
            <div className="flex flex-5 items-center justify-end gap-1.5 pr-[18px]">
                <svg viewBox="0 0 10 6" className="h-1.5 w-2.5" fill="none" stroke="#222" strokeWidth="1.200">
                    <path d="m1 5 4-4 4 4" />
                </svg>
                <svg viewBox="0 0 12 12" className="size-3">
                    <path d="M0 0h12v12H0z" fill="#bff0ea" />
                    <path d="M2 2.500h4M2 5h4l1 1 3.500-4M3 10l2.500-3 4 4" fill="none" stroke="#1c3038" strokeWidth="1.500" />
                </svg>
                <svg viewBox="0 0 12 8" className="h-2 w-3">
                    <path d="M2 2.500h9v5H2z" fill="#333" stroke="#222" />
                    <path d="M0 1h4v3H1z" fill="#222" />
                </svg>
                <svg viewBox="0 0 12 11" className="h-[11px] w-3" fill="none" stroke="#222">
                    <path d="M3 1.500h8.500v6H4M7.500 7.500v3M5 10.500h5M.5.5h3v3h-3zM2 3.500v7" />
                </svg>
                <svg viewBox="0 0 12 10" className="h-2.5 w-3" fill="none" stroke="#222">
                    <path d="M.5 3.500h2L5 1v8L2.500 6.500h-2zM6.500 3.500q1 1.500 0 3M8.300 2q2 3 0 6M10 1q2.800 4 0 8" />
                </svg>
                <span>ENG</span>
                <time className="ml-1">2:44 pm</time>
                <button aria-label="Notifications" className="ml-1.5">
                    <svg viewBox="0 0 13 12" className="h-3 w-[13px]" fill="none" stroke="#222">
                        <path d="M.5.5h12v8.500H9L6.500 11.500V9h-6z" />
                    </svg>
                </button>
            </div>
        </div>
    );
}

export default function App() {
    return (
        <div className="flex h-screen flex-col overflow-hidden bg-[#e6e6e6] font-['Open_Sans',sans-serif] text-[9px] leading-3">
            <TitleBar />
            <Ribbon />
            <QuickAccess />
            <FormulaBar />
            <main className="flex min-h-0 flex-1">
                <Sheet />
                <div className="flex w-[15px] shrink-0 flex-col items-center pt-0.5">
                    <ScrollArrow label="Scroll up" path="M0 4.500h6L3 1z" />
                    <div className="min-h-0 w-[11px] flex-1">
                        <div className="h-2/3 border border-[#ababab] bg-white" />
                    </div>
                    <ScrollArrow label="Scroll down" path="M0 1.500h6L3 5z" />
                </div>
            </main>
            <SheetTabs />
            <StatusBar />
            <Taskbar />
        </div>
    );
}
